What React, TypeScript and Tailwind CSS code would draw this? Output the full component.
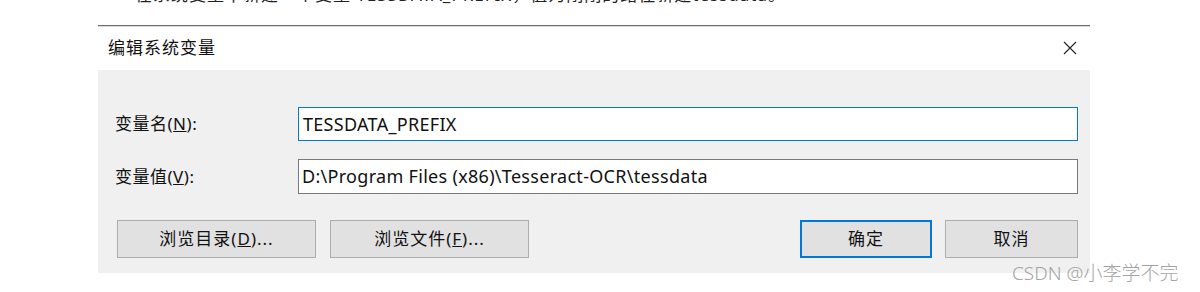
import React from "react";

const font = { fontFamily: '"Noto Sans", "Noto Sans CJK SC", sans-serif' };

function Btn({ children, w, primary }: { children: React.ReactNode; w: string; primary?: boolean }) {
  return (
    <div
      className={`${w} h-[38px] flex items-center justify-center bg-[#e1e1e1] text-[17px] tracking-[1px] text-[#111] ${
        primary ? "border-2 border-[#0078d7]" : "border border-[#adadad]"
      }`}
    >
      {children}
    </div>
  );
}

export default function App() {
  return (
    <div
      className="relative w-[1200px] h-[292px] bg-white overflow-hidden"
      style={font}
    >
      <div className="h-[4px] overflow-hidden pl-[135px]">
        <div className="-mt-[14px] text-[17px] leading-[17px] text-[#222] whitespace-nowrap tracking-[1px]">
          在系统变量中新建一个变量 TESSDATA_PREFIX，值为刚刚的路径新建tessdata。
        </div>
      </div>
      <div className="ml-[98px] w-[992px] mt-[21px]">
        <div className="h-[1px] bg-[#6e6e6e]" />
        <div className="h-[1px] bg-[#d8d8d8]" />
        <div className="h-[43px] bg-white flex items-center justify-between pl-[10px] pr-[13px]">
          <span className="text-[17px] tracking-[1px] text-[#111] -mt-[2px]">编辑系统变量</span>
          <svg width="14" height="14" viewBox="0 0 14 14" className="-mt-[2px]">
            <path d="M1 1 L13 13 M13 1 L1 13" stroke="#222" strokeWidth="1.1" />
          </svg>
        </div>
        <div className="h-[203px] bg-[#f0f0f0] pt-[37px] pl-[17px] pr-[12px]">
          <div className="flex items-center h-[34px]">
            <div className="w-[183px] text-[17px] tracking-[0.5px] text-[#111]">
              变量名(<span className="underline">N</span>):
            </div>
            <div className="flex-1 h-[34px] bg-white border border-[#0078d7] flex items-center pl-[4px] text-[18px] tracking-[0.3px] text-[#111]">
              TESSDATA_PREFIX
            </div>
          </div>
          <div className="flex items-center h-[35px] mt-[18px]">
            <div className="w-[183px] text-[17px] tracking-[0.5px] text-[#111]">
              变量值(<span className="underline">V</span>):
            </div>
            <div className="flex-1 h-[35px] bg-white border border-[#7a7a7a] flex items-center pl-[3px] text-[18px] tracking-[0.3px] text-[#111]">
              D:\Program Files (x86)\Tesseract-OCR\tessdata
            </div>
          </div>
          <div className="flex items-center mt-[26px] pl-[2px]">
            <Btn w="w-[199px]">
              浏览目录(<span className="underline">D</span>)...
            </Btn>
            <div className="w-[14px]" />
            <Btn w="w-[199px]">
              浏览文件(<span className="underline">F</span>)...
            </Btn>
            <div className="flex-1" />
            <Btn w="w-[132px]" primary>
              确定
            </Btn>
            <div className="w-[13px]" />
            <Btn w="w-[133px]">取消</Btn>
          </div>
        </div>
      </div>
      <div className="absolute left-[1012px] top-[261px] text-[19px] leading-[24px] font-light text-[#a3a3a3] whitespace-nowrap">
        CSDN @小李学不完
      </div>
    </div>
  );
}
